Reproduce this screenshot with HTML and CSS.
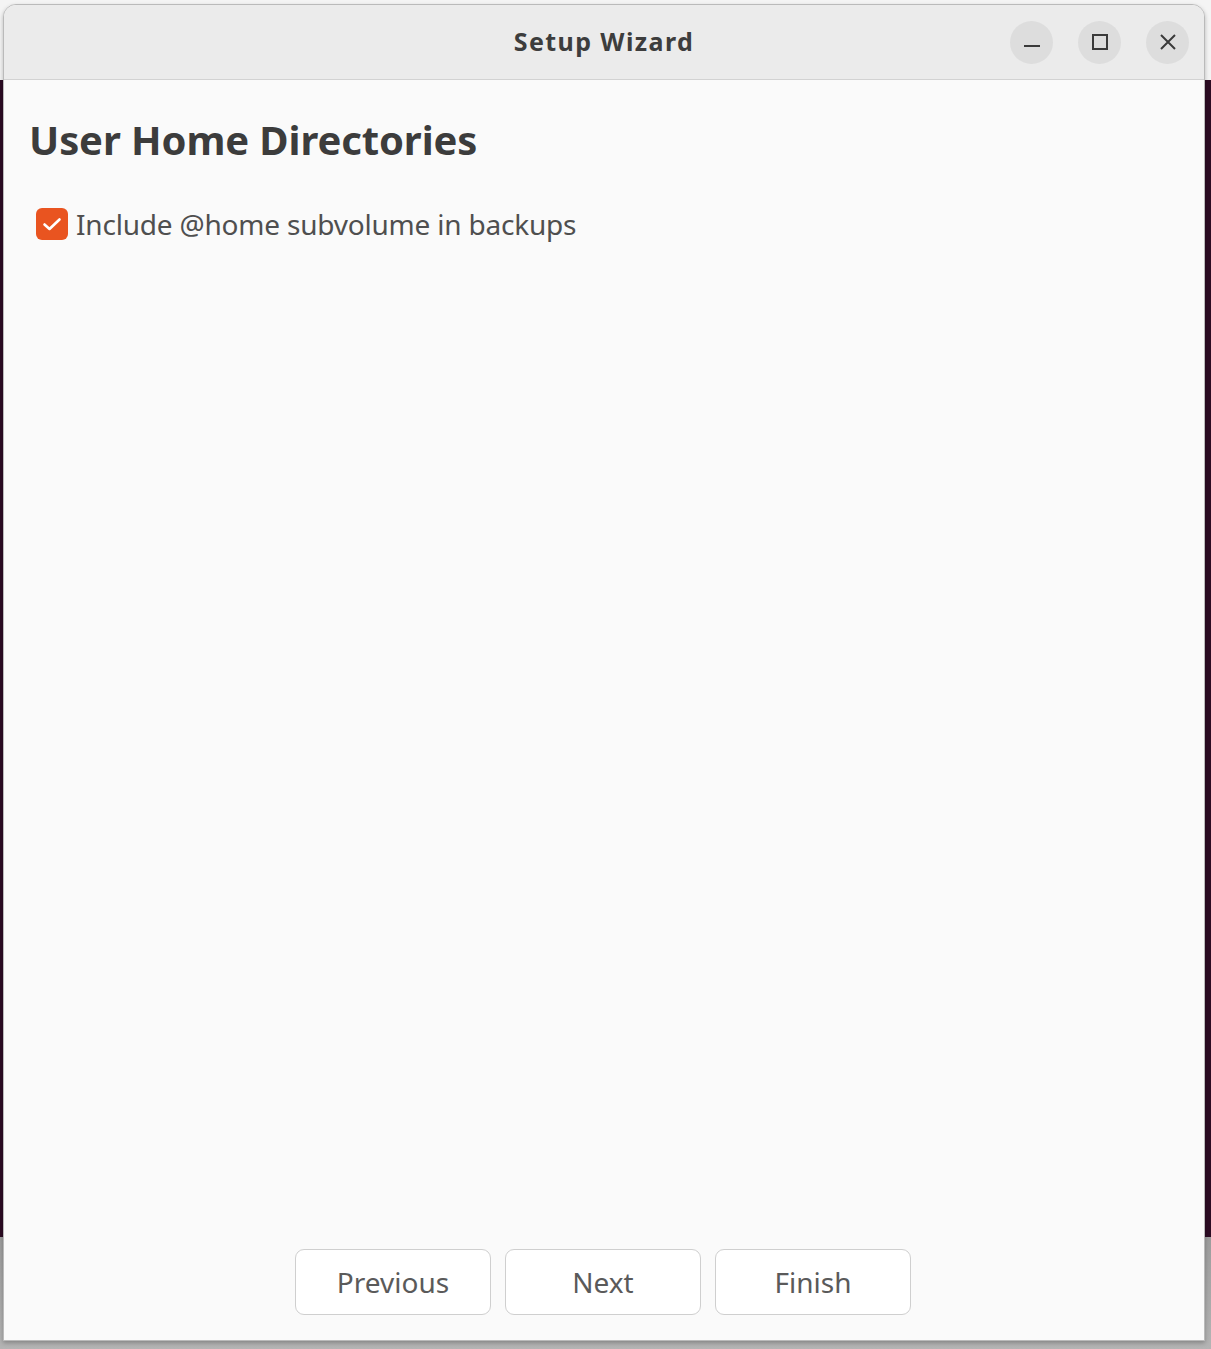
FILE: index.html
```html
<!DOCTYPE html>
<html lang="en">
<head>
<meta charset="utf-8">
<title>Setup Wizard</title>
<link rel="stylesheet" href="styles.css">
</head>
<body>
<div class="window">
  <header class="titlebar">
    <div class="spacer"></div>
    <div class="title">Setup Wizard</div>
    <div class="controls">
      <button class="ctl" aria-label="Minimize">
        <svg width="18" height="18" viewBox="0 0 18 18"><path d="M1 13h16" stroke="#3a3a3a" stroke-width="2" fill="none"/></svg>
      </button>
      <button class="ctl" aria-label="Maximize">
        <svg width="18" height="18" viewBox="0 0 18 18"><rect x="2" y="2" width="14" height="14" stroke="#3a3a3a" stroke-width="2" fill="none"/></svg>
      </button>
      <button class="ctl" aria-label="Close">
        <svg width="18" height="18" viewBox="0 0 18 18"><path d="M2 2L16 16M16 2L2 16" stroke="#3a3a3a" stroke-width="2" fill="none"/></svg>
      </button>
    </div>
  </header>
  <main class="content">
    <h1 class="heading">User Home Directories</h1>
    <label class="check-row">
      <span class="checkbox">
        <svg width="22" height="22" viewBox="0 0 22 22"><path d="M3.5 11.5l5 4.5 10-9.5" stroke="#fff" stroke-width="2.6" fill="none" stroke-linecap="round" stroke-linejoin="round"/></svg>
      </span>
      <span class="check-label">Include @home subvolume in backups</span>
    </label>
    <div class="fill"></div>
    <div class="buttons">
      <button class="btn">Previous</button>
      <button class="btn">Next</button>
      <button class="btn">Finish</button>
    </div>
  </main>
</div>
</body>
</html>
```

FILE: styles.css
```css
html, body {
  margin: 0;
  padding: 0;
}
body {
  width: 1211px;
  height: 1349px;
  overflow: hidden;
  background: linear-gradient(to bottom, #f4f4f4 0, #f4f4f4 80px, #2c0b23 80px, #2c0b23 1237px, #9c9c9c 1237px, #b4b4b4 1349px);
  font-family: "Noto Sans", "Open Sans", sans-serif;
}
.window {
  box-sizing: border-box;
  margin: 4px 0 0 3px;
  width: 1202px;
  height: 1337px;
  border: 1px solid #bababa;
  border-radius: 13px 13px 0 0;
  background: #fafafa;
  display: flex;
  flex-direction: column;
  overflow: hidden;
  box-shadow: 0 2px 4px rgba(0,0,0,0.25);
}
.titlebar {
  box-sizing: border-box;
  height: 75px;
  flex: none;
  background: #ebebeb;
  border-bottom: 1px solid #d2d2d2;
  display: grid;
  grid-template-columns: 1fr auto 1fr;
  align-items: center;
}
.title {
  font-size: 25px;
  line-height: 30px;
  font-weight: 700;
  color: #3d3d3d;
  letter-spacing: 1.4px;
  padding-bottom: 3px;
}
.controls {
  display: flex;
  justify-content: flex-end;
  gap: 25px;
  padding-right: 15px;
}
.ctl {
  width: 43px;
  height: 43px;
  border-radius: 50%;
  border: none;
  padding: 0;
  background: #dddddd;
  display: flex;
  align-items: center;
  justify-content: center;
}
.ctl svg { display: block; }
.content {
  flex: 1;
  display: flex;
  flex-direction: column;
  padding: 0 0 25px 0;
}
.heading {
  margin: 36px 0 0 25px;
  font-size: 40px;
  line-height: 48px;
  font-weight: 700;
  color: #3c3c3c;
  letter-spacing: -0.1px;
}
.check-row {
  display: flex;
  align-items: center;
  gap: 8px;
  margin: 42px 0 0 32px;
}
.checkbox {
  width: 32px;
  height: 32px;
  border-radius: 6px;
  background: #e95420;
  display: flex;
  align-items: center;
  justify-content: center;
  flex: none;
}
.checkbox svg { display: block; }
.check-label {
  font-size: 28px;
  line-height: 36px;
  color: #4f4f4f;
  letter-spacing: -0.2px;
}
.fill { flex: 1; }
.buttons {
  display: flex;
  justify-content: center;
  gap: 14px;
  padding-right: 2px;
}
.btn {
  box-sizing: border-box;
  width: 196px;
  height: 66px;
  border: 1.5px solid #cfcfcf;
  border-radius: 9px;
  background: #ffffff;
  font-family: "Noto Sans", "Open Sans", sans-serif;
  font-size: 28px;
  color: #5a5a5a;
  padding: 0;
}
```
